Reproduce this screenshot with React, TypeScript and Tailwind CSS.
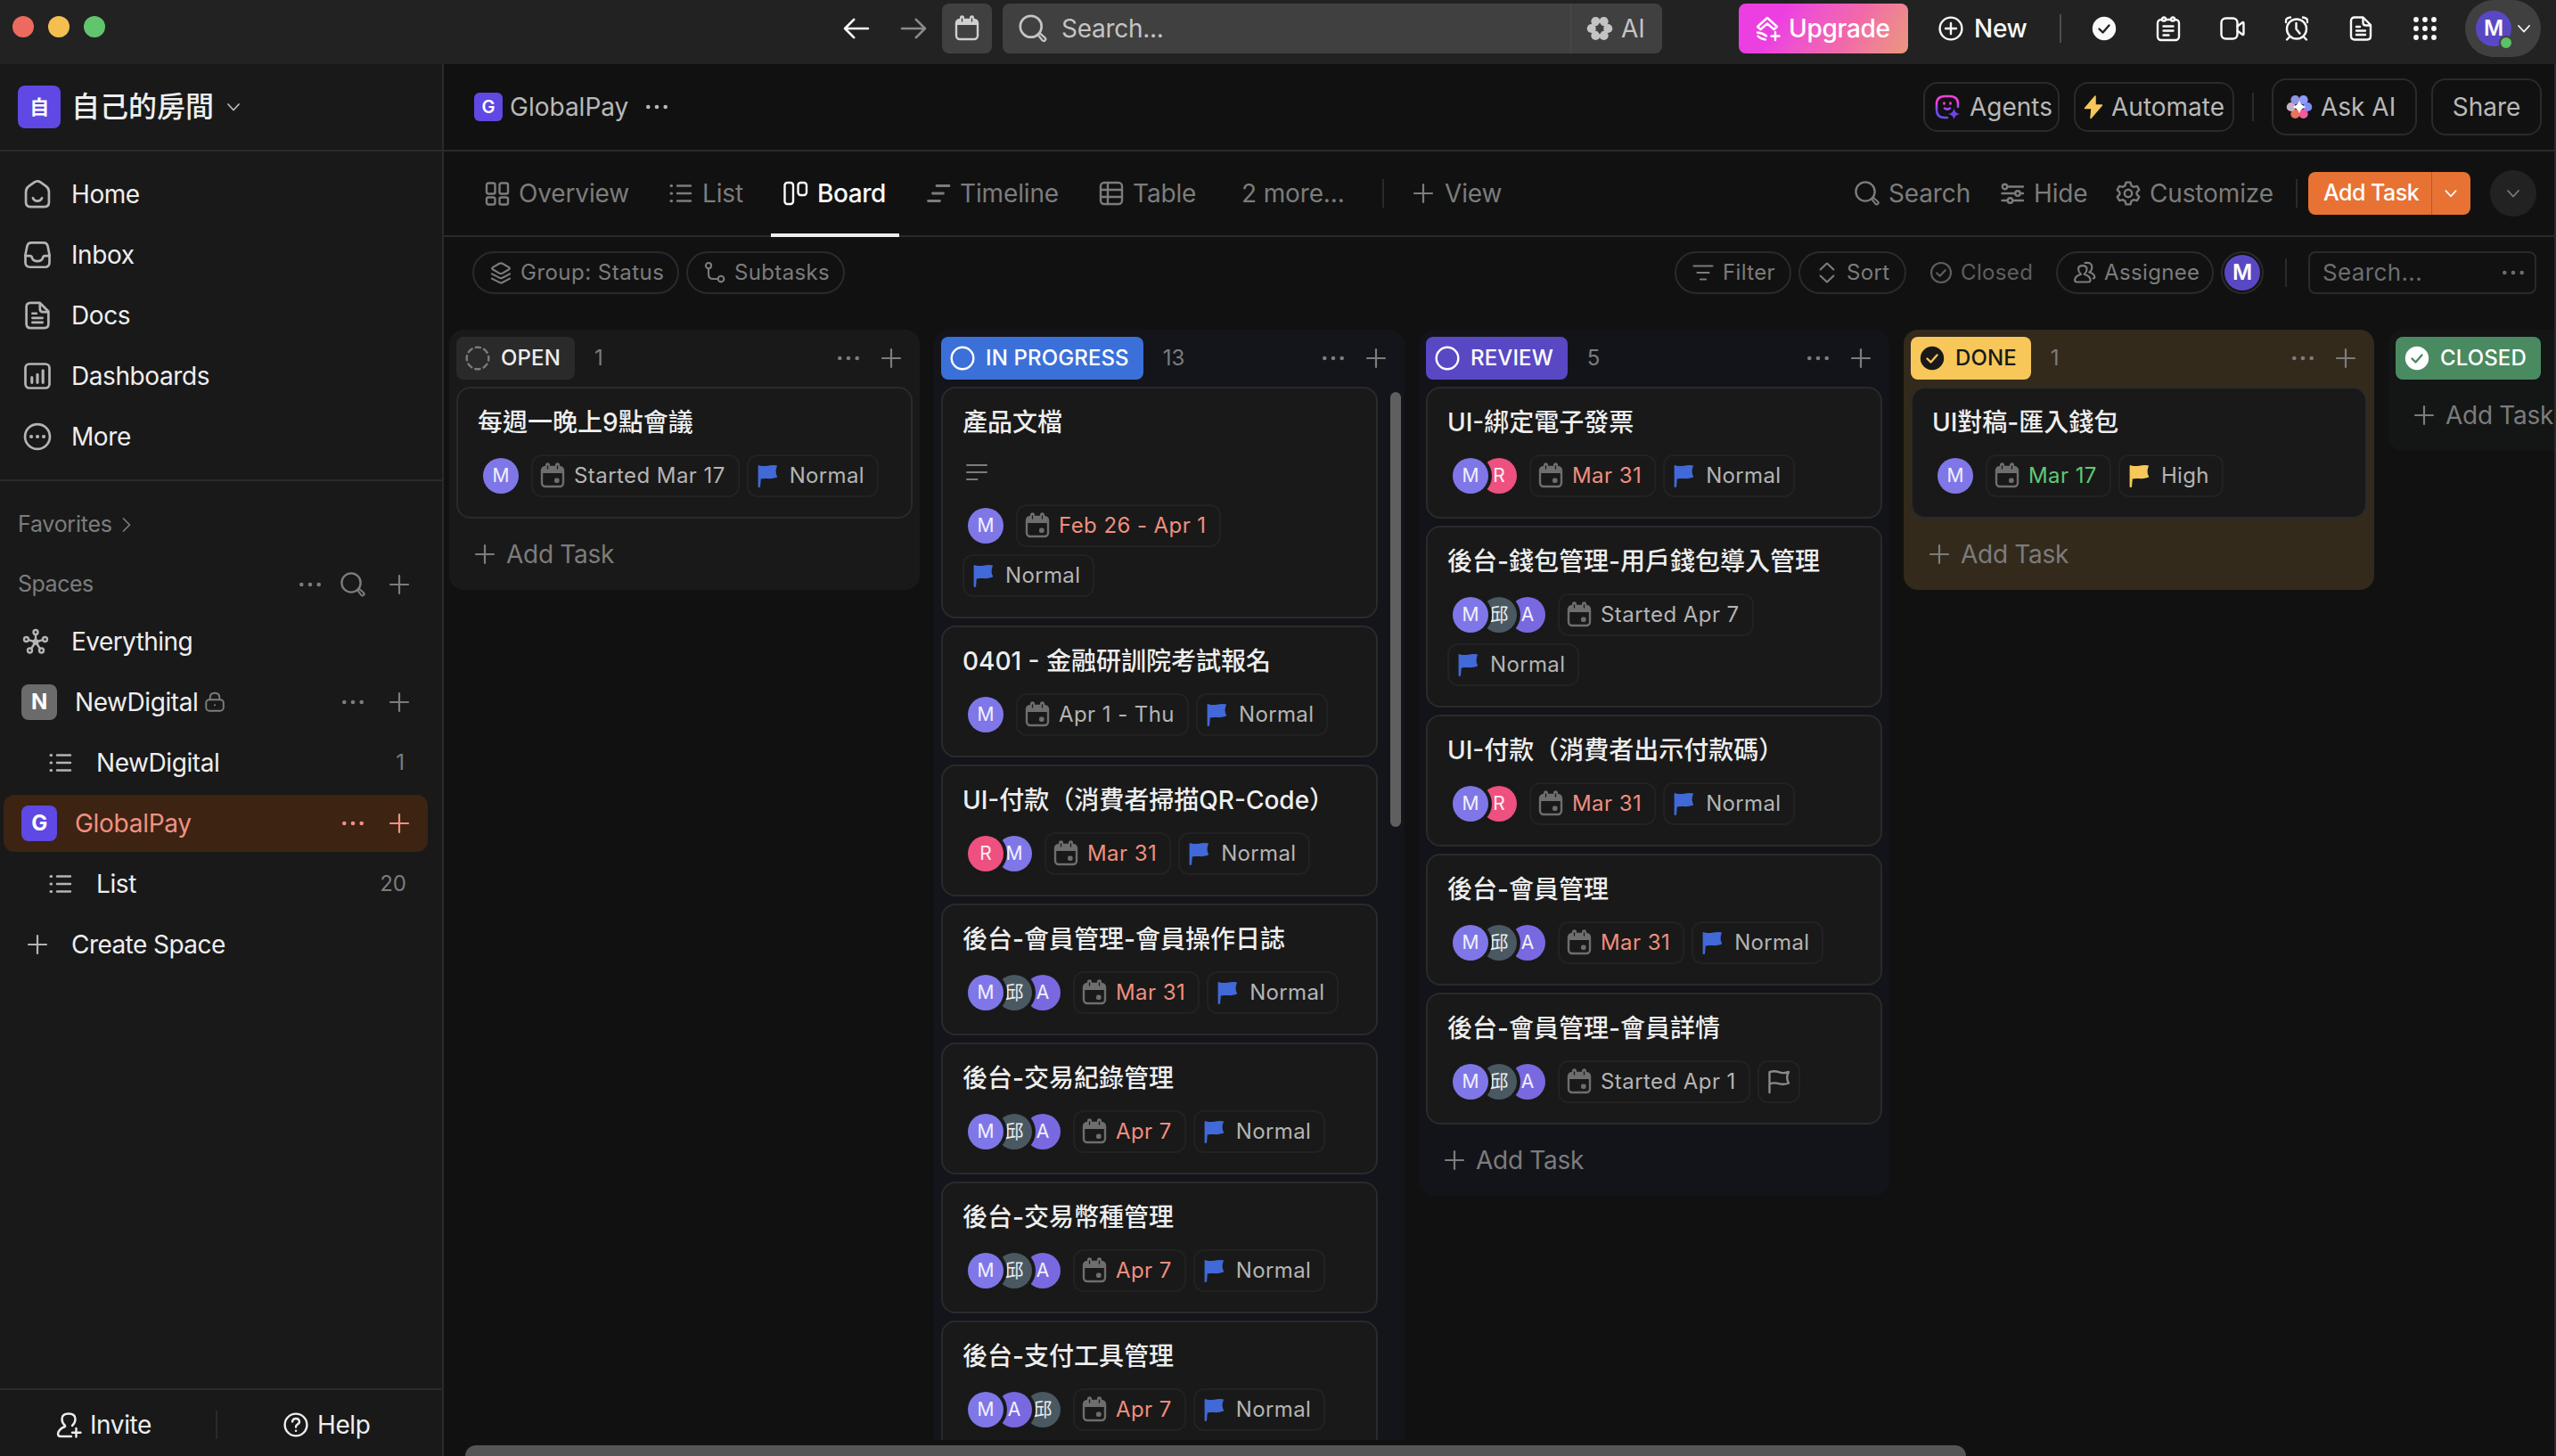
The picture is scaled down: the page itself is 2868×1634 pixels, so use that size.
import type { ReactNode } from "react";

type IconProps = { className?: string; children?: ReactNode };

// every icon is drawn on a 32 unit grid
function Icon({ className = "", children }: IconProps) {
  return (
    <svg
      viewBox="0 0 32 32"
      fill="none"
      stroke="currentColor"
      strokeWidth="2.4"
      strokeLinecap="round"
      strokeLinejoin="round"
      className={`shrink-0 ${className}`}
    >
      {children}
    </svg>
  );
}

const Dots = ({ className = "size-8" }) => (
  <Icon className={className}>
    <g fill="currentColor" stroke="none">
      <circle cx="6.3" cy="16" r="2.3" />
      <circle cx="16" cy="16" r="2.3" />
      <circle cx="25.7" cy="16" r="2.3" />
    </g>
  </Icon>
);

const Plus = ({ className = "size-8" }) => (
  <Icon className={className}>
    <path d="M16 6v20M6 16h20" strokeWidth="2.2" />
  </Icon>
);

const Chevron = ({ className = "size-8" }) => (
  <Icon className={className}>
    <path d="M10 13l6 6.5 6-6.5" strokeWidth="1.8" />
  </Icon>
);

const SearchIcon = ({ className = "size-8" }) => (
  <Icon className={className}>
    <circle cx="14" cy="14" r="10.6" />
    <path d="M21.2 22.6l1.8-1.8 5 4.4q1.4 1.4.1 2.7t-2.7-.1z" strokeWidth="2" />
  </Icon>
);

const ListIcon = ({ className = "size-8" }) => (
  <Icon className={className}>
    <path d="M12 7.5H27M12 16H27M12 24.5H27" />
    <path d="M5 7.5h.6M5 16h.6M5 24.5h.6" strokeWidth="3" />
  </Icon>
);

const DocIcon = ({ className = "size-8" }) => (
  <Icon className={className}>
    <path d="M9 3.5h9.5L27 12v12.5q0 4-4 4H9q-4 0-4-4v-17q0-4 4-4z" />
    <path d="M18.5 4v5.5q0 3 3 3h5" />
    <path d="M11 14h4M11 18.5h10M11 23h10" />
  </Icon>
);

const CalendarIcon = ({ className = "size-8" }) => (
  <Icon className={className}>
    <rect x="4" y="6" width="24" height="22" rx="4" />
    <path d="M4 7.5q1-2 4-2h16q3 0 4 2V13H4z" fill="currentColor" stroke="none" />
    <path d="M10.5 3.8v2.4M21.5 3.8v2.4" strokeWidth="5" />
    <path d="M10.5 5v3M21.5 5v3" stroke="#191919" strokeWidth="1.3" />
    <rect x="18" y="18.5" width="5.6" height="5.6" rx="2" fill="currentColor" stroke="none" />
  </Icon>
);

const FlagIcon = ({ className = "size-8", outline = false }) => (
  <Icon className={className}>
    {outline ? (
      <path d="M5.500 28V5.200q5.500-2 10.500 0t11-.2q-3.600 6.300 0 12.500-5.500 2.200-11 .6t-10.500.4" />
    ) : (
      <path
        d="M5.500 28V5q5 1.600 10 .6t9.500-.4q-2.800 6 .2 11.800-5 1.700-9.700 1.200T7 18.500L6.200 28z"
        fill="currentColor"
        strokeWidth="1.800"
      />
    )}
  </Icon>
);

const CheckSolid = ({ className = "size-8", tick = "#222222" }) => (
  <Icon className={className}>
    <circle cx="16" cy="16" r="13.2" fill="currentColor" stroke="none" />
    <path d="M10.500 16.500l4 4 7-8" stroke={tick} />
  </Icon>
);

const HomeIcon = ({ className = "" }) => (
  <Icon className={className}>
    <path d="M4.500 13.500q0-3.500 3-5.600l5.300-3.700q3.200-2.200 6.400 0l5.300 3.700q3 2.100 3 5.600V24q0 4.500-4.500 4.500H9q-4.500 0-4.500-4.500z" />
    <path d="M11.500 19.800q1.500 3 4.500 3t4.500-3" />
  </Icon>
);

const InboxIcon = ({ className = "" }) => (
  <Icon className={className}>
    <path d="M10 3.800h12q3.600 0 4.300 3.600l1.700 8.600v7.500q0 4.700-4.700 4.700H8.700Q4 28.200 4 23.500V16l1.700-8.600Q6.400 3.800 10 3.800z" />
    <path d="M4 17h4.200q2 0 2.500 2 .9 3.300 5.300 3.300t5.300-3.300q.5-2 2.500-2H28" />
  </Icon>
);

const DashIcon = ({ className = "" }) => (
  <Icon className={className}>
    <rect x="4" y="4" width="24" height="24" rx="4" />
    <path d="M10.500 17.500v5M16 14.500v8M21.500 10.500v12" strokeWidth="2.800" />
  </Icon>
);

const MoreIcon = ({ className = "" }) => (
  <Icon className={className}>
    <circle cx="16" cy="16" r="12.400" />
    <path d="M9.800 16h.1M16 16h.1M22.200 16h.1" strokeWidth="3.600" />
  </Icon>
);

const HubIcon = ({ className = "" }) => (
  <Icon className={className}>
    <circle cx="16" cy="5.500" r="2.500" />
    <circle cx="5.500" cy="13.500" r="2.500" />
    <circle cx="26.500" cy="13.500" r="2.500" />
    <circle cx="9.500" cy="26" r="2.500" />
    <circle cx="22.500" cy="26" r="2.500" />
    <circle cx="16" cy="16.500" r="2.300" fill="currentColor" />
    <path d="M16 8v8.500M8 14.200l8 2.300 8-2.300M11 24l5-7.500 5 7.500" />
  </Icon>
);

const LockIcon = ({ className = "" }) => (
  <Icon className={className}>
    <rect x="4" y="12.500" width="24" height="15.500" rx="4.500" />
    <path d="M9.500 12.500V10q0-6.500 6.500-6.500T22.500 10v2.500M16 20h.1" />
  </Icon>
);

const GearIcon = ({ className = "" }) => (
  <Icon className={className}>
    <circle cx="16" cy="16" r="4.200" />
    <path d="M13.600 3.600h4.800l1.200 3.800 2.400 1.400 3.900-.9 2.400 4.100-2.700 2.900v2.200l2.700 2.900-2.400 4.100-3.900-.9-2.400 1.400-1.200 3.800h-4.800l-1.200-3.800L10 23.200l-3.900.9L3.700 20l2.700-2.900v-2.200L3.700 12l2.400-4.100 3.900.9 2.400-1.400z" />
  </Icon>
);

function FlowerIcon({ className = "", color = false }) {
  const fills = ["#8f9bff", "#7f8cf5", "#f25a9b", "#e9705a", "#c9b0c4", "#8f97e0"];
  return (
    <Icon className={className}>
      <g stroke="none">
        {[30, 90, 150, 210, 270, 330].map((angle, i) => (
          <circle
            key={angle}
            cx={16 + 9.2 * Math.sin((angle * Math.PI) / 180)}
            cy={16 - 9.2 * Math.cos((angle * Math.PI) / 180)}
            r="5.100"
            fill={color ? fills[i] : "currentColor"}
          />
        ))}
        {color ? (
          <path d="M16 8.500q1.500 6 7.500 7.500-6 1.500-7.500 7.500-1.500-6-7.500-7.500 6-1.500 7.500-7.500z" fill="#ffffff" />
        ) : (
          <path d="M16 9.500l4.600 6.500-4.600 6.500-4.600-6.500z" fill="#404040" />
        )}
      </g>
    </Icon>
  );
}

const Divider = ({ className = "" }) => (
  <div className={`h-8 w-0.5 shrink-0 bg-[#2a2a2a] ${className}`} />
);

function TopBar() {
  return (
    <header className="flex h-[72px] shrink-0 items-center bg-[#222222] pb-2 text-[#fafafa]">
      <div className="mt-[-4px] flex w-[931px] shrink-0 gap-4 pl-3.5">
        <span className="size-6 rounded-full bg-[#ec6a5e]" />
        <span className="size-6 rounded-full bg-[#f4bf50]" />
        <span className="size-6 rounded-full bg-[#61c56e]" />
      </div>
      <div className="flex w-[126px] shrink-0 gap-8 pl-3">
        <Icon className="size-9">
          <path d="M27.500 16H4.500M13.500 7L4.500 16l9 9" />
        </Icon>
        <Icon className="-ml-1 size-9 text-[#8a8a8a]">
          <path d="M4.500 16h23M18.500 7l9 9-9 9" />
        </Icon>
      </div>
      <div className="flex h-14 w-14 shrink-0 items-center justify-center rounded-lg bg-[#404040] text-[#d0d0d0]">
        <Icon className="size-8">
          <rect x="4" y="6" width="24" height="22" rx="4" />
          <path d="M4 7.500q1-2 4-2h16q3 0 4 2V12H4z" fill="currentColor" stroke="none" />
          <path d="M10.500 3.800v2.400M21.500 3.800v2.400" strokeWidth="5" />
          <path d="M10.500 5v3M21.500 5v3" stroke="#404040" strokeWidth="1.300" />
        </Icon>
      </div>
      <div className="ml-3 flex h-14 w-[740px] shrink-0 items-center rounded-lg bg-[#404040] text-[28px] text-[#c4c4c4]">
        <SearchIcon className="ml-4 size-9" />
        <span className="ml-3.5 w-[571px] tracking-[-0.01em]">Search...</span>
        <div className="flex h-14 items-center border-l border-[#4a4a4a] pl-4">
          <FlowerIcon className="size-8" />
          <span className="ml-2">AI</span>
        </div>
      </div>
      <div className="ml-auto flex h-14 w-[190px] shrink-0 items-center rounded-lg bg-linear-120 from-[#ec3fe2] from-25% via-[#f269a8] via-65% to-[#ea987c] pl-4 text-[28px] font-medium tracking-[-0.01em] text-white">
        <Icon className="size-8">
          <path d="M5 14L16 4l11 10-3.500 3L16 10.500 8.500 17z" />
          <path d="M5 20.500q6 .5 10 4M5.500 24.500q3.500 3.500 8.500 4M25 20v9M20.500 24.500h9" />
        </Icon>
        <span className="ml-2">Upgrade</span>
      </div>
      <div className="ml-8 flex w-[138px] shrink-0 items-center gap-2.5 text-[28px] font-medium tracking-[-0.01em]">
        <Icon className="size-8">
          <circle cx="16" cy="16" r="12.400" />
          <path d="M16 10v12M10 16h12" />
        </Icon>
        New
      </div>
      <div className="h-8 w-0.5 shrink-0 bg-[#4d4d4d]" />
      <div className="flex w-[555px] shrink-0 items-center pl-8">
        <CheckSolid className="mr-10 size-8" />
        <Icon className="mr-10 size-8">
          <rect x="4" y="6" width="24" height="23" rx="4" />
          <path d="M10.500 13.500h11M10.500 18.500h11M10.500 23.500h6" />
          <circle cx="11" cy="5.500" r="2" fill="#222222" />
          <circle cx="21" cy="5.500" r="2" fill="#222222" />
        </Icon>
        <Icon className="mr-10 size-8">
          <rect x="3.500" y="4.500" width="18" height="23" rx="5" />
          <path d="M21.500 13.500l6-4.500q1 0 1 1v12q0 1-1 1l-6-4.500" />
        </Icon>
        <Icon className="mr-10 size-8">
          <circle cx="16" cy="16.500" r="11" />
          <path d="M15.500 10v6.500l4 5M4 9q-1-5 5-5.500M28 9q1-5-5-5.500M8 25.500l-3 3M24 25.500l3 3" />
        </Icon>
        <DocIcon className="mr-10 size-8" />
        <Icon className="mr-[29px] size-8">
          <g fill="currentColor" stroke="none">
            {[6, 16, 26].map((y) =>
              [6, 16, 26].map((x) => <circle key={`${x}-${y}`} cx={x} cy={y} r="2.900" />)
            )}
          </g>
        </Icon>
        <div className="flex h-16 w-[85px] shrink-0 items-center rounded-full bg-[#404040] pl-3">
          <div className="relative flex size-10 shrink-0 items-center justify-center rounded-full bg-[#5948c4] text-2xl font-semibold">
            M
            <span className="absolute -right-0.5 -bottom-1 size-4 rounded-full border-2 border-[#404040] bg-[#5ac267]" />
          </div>
          <Chevron className="-ml-0.5 size-8" />
        </div>
      </div>
    </header>
  );
}

const nav = [
  { label: "Home", icon: HomeIcon },
  { label: "Inbox", icon: InboxIcon },
  { label: "Docs", icon: DocIcon },
  { label: "Dashboards", icon: DashIcon },
  { label: "More", icon: MoreIcon },
];

function Sidebar() {
  return (
    <aside className="flex w-[498px] shrink-0 flex-col border-r-2 border-[#2a2a2a] bg-[#191919] text-[28px] tracking-[-0.015em] text-[#eeeeee]">
      <div className="flex h-[98px] shrink-0 items-center border-b-2 border-[#2a2a2a] pl-5">
        <div className="flex size-12 items-center justify-center rounded-lg bg-[#5f48e3] text-[22px] font-semibold text-white">
          自
        </div>
        <span className="ml-3 text-[32px] font-medium tracking-normal">自己的房間</span>
        <Chevron className="ml-1.5 size-8 text-[#b8b8b8]" />
      </div>

      <nav className="h-[370px] shrink-0 border-b-2 border-[#2a2a2a] pt-3.5">
        {nav.map((item) => (
          <div key={item.label} className="flex h-[68px] items-center pl-6">
            <item.icon className="size-9 text-[#b4b4b4]" />
            <span className="ml-5">{item.label}</span>
          </div>
        ))}
      </nav>

      <div className="mt-[15px] flex h-[68px] items-center pl-5 text-[25px] tracking-[-0.01em] text-[#7c7c7c]">
        Favorites
        <Icon className="ml-0.5 size-7">
          <path d="M12 8l8 8-8 8" strokeWidth="2" />
        </Icon>
      </div>
      <div className="flex h-[66px] items-center pr-8 pl-5 text-[25px] tracking-[-0.02em] text-[#7c7c7c]">
        Spaces
        <Dots className="ml-auto size-8" />
        <SearchIcon className="ml-4 size-8" />
        <Plus className="ml-5 size-8" />
      </div>
      <div className="flex h-[62px] items-center pl-6">
        <HubIcon className="size-8 text-[#b4b4b4]" />
        <span className="ml-6 tracking-[-0.02em]">Everything</span>
      </div>
      <div className="mt-[3px] flex h-[68px] items-center pr-8 pl-6">
        <div className="flex size-10 items-center justify-center rounded-lg bg-[#6b6b6b] text-2xl font-bold text-white">
          N
        </div>
        <span className="ml-5">NewDigital</span>
        <LockIcon className="ml-1.5 size-6.5 text-[#7c7c7c]" />
        <Dots className="ml-auto size-8 text-[#7c7c7c]" />
        <Plus className="ml-5 size-8 text-[#7c7c7c]" />
      </div>
      <div className="flex h-[68px] items-center pr-[42px] pl-[52px]">
        <ListIcon className="size-8 text-[#b4b4b4]" />
        <span className="ml-6">NewDigital</span>
        <span className="ml-auto text-2xl tracking-normal text-[#7c7c7c]">1</span>
      </div>
      <div className="mx-1 my-0.5 flex h-16 w-[476px] items-center rounded-xl bg-[#3c2312] pr-4 pl-5 text-[#f09183]">
        <div className="flex size-10 items-center justify-center rounded-lg bg-[#5f48e3] text-2xl font-bold text-white">
          G
        </div>
        <span className="ml-5 tracking-[-0.01em]">GlobalPay</span>
        <Dots className="ml-auto size-8" />
        <Plus className="ml-5 size-8" />
      </div>
      <div className="flex h-[68px] items-center pr-10 pl-[52px]">
        <ListIcon className="size-8 text-[#b4b4b4]" />
        <span className="ml-6">List</span>
        <span className="ml-auto text-2xl tracking-normal text-[#7c7c7c]">20</span>
      </div>
      <div className="flex h-[68px] items-center pl-[26px]">
        <Plus className="size-8 text-[#b4b4b4]" />
        <span className="ml-[22px] tracking-[-0.02em]">Create Space</span>
      </div>

      <div className="mt-auto flex h-[76px] shrink-0 items-center border-t-2 border-[#2a2a2a] pt-1">
        <div className="flex w-[242px] items-center pl-[61px]">
          <Icon className="size-8">
            <path d="M20 17q3.500-3 3.500-7.500 0-6-7.500-6t-7.500 6q0 4.500 3.500 7.500v1q-7 2.500-8 8 0 3 3 3h12M24.500 20v9.500M20 24.700h9.500" />
          </Icon>
          <span className="ml-2">Invite</span>
        </div>
        <Divider />
        <div className="flex items-center pl-[72px]">
          <Icon className="size-8">
            <circle cx="16" cy="16" r="12.400" />
            <path d="M12 12.500q.5-3.500 4-3.500t4 3.300q0 2.200-2.500 3.400Q16 16.500 16 18.500M16 22.700h.1" />
          </Icon>
          <span className="ml-2">Help</span>
        </div>
      </div>
    </aside>
  );
}

function TitleBar() {
  return (
    <div className="flex h-[98px] shrink-0 items-center border-b-2 border-[#2a2a2a] pr-3.5 pl-[34px] text-[28px] text-[#b8b8b8]">
      <div className="flex size-8 items-center justify-center rounded-md bg-[#5f48e3] text-xl font-semibold text-white">
        G
      </div>
      <span className="ml-2">GlobalPay</span>
      <Dots className="ml-4 size-8" />

      <div className="ml-auto flex h-14 w-[153px] items-center rounded-2xl border-2 border-[#2a2a2a] pl-[9px]">
        <svg viewBox="0 0 32 32" fill="none" strokeWidth="2.600" strokeLinecap="round" className="size-8 shrink-0">
          <defs>
            <linearGradient id="agents" x1="0" y1="0" x2="0" y2="1">
              <stop offset="0.300" stopColor="#f23fe0" />
              <stop offset="0.700" stopColor="#6350f0" />
            </linearGradient>
          </defs>
          <path d="M28 16v-3q0-9-9-9h-6q-9 0-9 9v6q0 9 9 9h3" stroke="url(#agents)" />
          <path d="M12.500 11.500v1M19.500 11.500v1" stroke="#f23fe0" />
          <path d="M13 17.500q3 2.200 6 0" stroke="#a04cf0" />
          <path d="M23.500 17.500q1 5.500 6.500 6.500-5.500 1-6.500 6-1-5-6.500-6 5.500-1 6.500-6.500z" fill="#6a45f0" />
        </svg>
        <span className="ml-[9px]">Agents</span>
      </div>
      <div className="ml-4 flex h-14 w-[180px] items-center rounded-2xl border-2 border-[#2a2a2a] pl-1">
        <Icon className="size-8 text-[#f8c75a]">
          <path d="M18 4L6.500 17.500H14L13 28.500 25.500 14H18z" fill="currentColor" strokeWidth="1.500" />
        </Icon>
        <span className="ml-1">Automate</span>
      </div>
      <Divider className="ml-5" />
      <div className="ml-5 flex h-16 w-[163px] items-center rounded-2xl border-2 border-[#2a2a2a] pl-[13px]">
        <FlowerIcon className="size-8" color />
        <span className="ml-2">Ask AI</span>
      </div>
      <div className="ml-4 flex h-16 w-[124px] items-center justify-center rounded-2xl border-2 border-[#2a2a2a]">
        Share
      </div>
    </div>
  );
}

function Tabs() {
  return (
    <div className="flex h-24 shrink-0 items-center border-b-2 border-[#2a2a2a] text-[28px] tracking-[-0.005em] text-[#7c7c7c]">
      <div className="flex w-[208px] shrink-0 items-center pl-11">
        <Icon className="size-8">
          <rect x="4" y="4.500" width="9.500" height="12" rx="2" />
          <rect x="18.500" y="4.500" width="9.500" height="12" rx="2" />
          <rect x="4" y="20.500" width="9.500" height="8" rx="2" />
          <rect x="18.500" y="20.500" width="9.500" height="8" rx="2" />
        </Icon>
        <span className="ml-2">Overview</span>
      </div>
      <div className="flex w-[159px] shrink-0 items-center pl-[42px]">
        <ListIcon className="size-8" />
        <span className="ml-2">List</span>
      </div>
      <div className="relative flex h-full w-36 shrink-0 items-center pl-3 font-medium tracking-[-0.015em] text-[#fafafa]">
        <Icon className="size-8">
          <rect x="3.500" y="4" width="9.500" height="24" rx="3" />
          <rect x="18.500" y="4" width="9.500" height="14" rx="3" />
        </Icon>
        <span className="ml-2">Board</span>
        <span className="absolute inset-x-0 -bottom-0.5 h-1 bg-[#eeeeee]" />
      </div>
      <div className="flex w-[193px] shrink-0 items-center pl-7">
        <Icon className="size-8">
          <path d="M14 7.500h14M9.500 16h12M4.500 24.500h13" strokeWidth="2.800" />
        </Icon>
        <span className="ml-2">Timeline</span>
      </div>
      <div className="flex w-[162px] shrink-0 items-center pl-[29px]">
        <Icon className="size-8">
          <rect x="4" y="4" width="24" height="24" rx="4" />
          <path d="M4 12h24M4 20h24M12 4v24" />
        </Icon>
        <span className="ml-2">Table</span>
      </div>
      <span className="w-[187px] shrink-0 pl-[29px]">2 more...</span>
      <Divider />
      <Plus className="ml-[28px] size-8" />
      <span className="ml-2">View</span>

      <div className="ml-auto flex w-[163px] shrink-0 items-center">
        <SearchIcon className="size-8" />
        <span className="ml-2">Search</span>
      </div>
      <div className="flex w-[130px] shrink-0 items-center">
        <Icon className="size-8">
          <path d="M11 8.500h17M4.500 16h14M25 16h3M4.500 24h6M17.500 24H28" />
          <circle cx="7.500" cy="8.500" r="2.700" />
          <circle cx="22" cy="16" r="2.700" />
          <circle cx="13.500" cy="24" r="2.700" />
        </Icon>
        <span className="ml-2">Hide</span>
      </div>
      <div className="flex w-[204px] shrink-0 items-center">
        <GearIcon className="size-8" />
        <span className="ml-2">Customize</span>
      </div>
      <Divider />
      <div className="ml-3 flex h-12 w-[182px] shrink-0 items-center rounded-lg bg-[#e87233] text-[25px] font-medium tracking-[-0.02em] text-white">
        <span className="w-[138px] pl-[17px]">Add Task</span>
        <span className="flex h-12 items-center border-l border-[#b85a2c] pl-1.5">
          <Chevron className="size-7.5" />
        </span>
      </div>
      <div className="mr-5 ml-[22px] flex size-[52px] shrink-0 items-center justify-center rounded-full bg-[#222222]">
        <Chevron className="size-8" />
      </div>
    </div>
  );
}

function FilterBar() {
  return (
    <div className="flex h-20 shrink-0 items-center text-2xl tracking-[0.015em] text-[#7c7c7c]">
      <div className="ml-8 flex h-12 w-[232px] shrink-0 items-center rounded-full border-2 border-[#2a2a2a] pl-4">
        <Icon className="size-7">
          <path d="M14 4.300q2-1 4 0l8.500 5q1.500 1.200 0 2.400l-8.500 5q-2 1-4 0l-8.500-5q-1.500-1.200 0-2.400z" />
          <path d="M4.500 17.500l9.500 5q2 1 4 0l9.500-5M4.500 23.500l9.500 5q2 1 4 0l9.500-5" />
        </Icon>
        <span className="ml-2 tracking-[0.02em]">Group: Status</span>
      </div>
      <div className="ml-2 flex h-12 w-[178px] shrink-0 items-center rounded-full border-2 border-[#2a2a2a] pl-4">
        <Icon className="size-7">
          <circle cx="8" cy="7" r="3.500" />
          <circle cx="24" cy="24" r="3.800" />
          <path d="M8 10.500V18q0 6 6 6h6" />
        </Icon>
        <span className="ml-2">Subtasks</span>
      </div>

      <div className="ml-auto flex h-12 w-[131px] shrink-0 items-center rounded-full border-2 border-[#2a2a2a] pl-4">
        <Icon className="size-7">
          <path d="M4 7.500h24M8.500 16h15M12.500 24.500h7" />
        </Icon>
        <span className="ml-2">Filter</span>
      </div>
      <div className="ml-2 flex h-12 w-[121px] shrink-0 items-center rounded-full border-2 border-[#2a2a2a] pl-4">
        <Icon className="size-7">
          <path d="M7.500 12L16 4l8.500 8M7.500 20l8.500 8 8.500-8" />
        </Icon>
        <span className="ml-2">Sort</span>
      </div>
      <div className="flex w-[168px] shrink-0 items-center pl-[25px] text-[#5f5f5f]">
        <Icon className="size-7">
          <circle cx="16" cy="16" r="12.600" />
          <path d="M10.500 16.500l4 3.800 7-7.500" />
        </Icon>
        <span className="ml-2">Closed</span>
      </div>
      <div className="flex h-12 w-[177px] shrink-0 items-center rounded-full border-2 border-[#2a2a2a] pl-4">
        <Icon className="size-7">
          <path d="M15.500 18q3.500-3 3.500-6.500 0-4.500-5.500-4.500T8 11.500Q8 15 11.500 18q-7.500 2-8 7.500 0 2.500 2.500 2.500h15q2.500 0 2.500-2.500-.5-5.500-8-7.500z" />
          <path d="M16.500 3.500q9-1.500 9 5.500 0 4-3.500 6.500 6.500 2 7 6 0 2-2 2" />
        </Icon>
        <span className="ml-2">Assignee</span>
      </div>
      <div className="ml-2 flex size-12 shrink-0 items-center justify-center rounded-full border-2 border-[#2a2a2a]">
        <div className="flex size-10 shrink-0 items-center justify-center rounded-full bg-[#5948c4] text-2xl font-semibold tracking-normal text-white">
          M
        </div>
      </div>
      <Divider className="ml-6" />
      <div className="mr-5 ml-6 flex h-12 w-64 shrink-0 items-center rounded-lg border-2 border-[#2a2a2a] pr-2 pl-3.5 text-[26px] text-[#6e6e6e]">
        Search...
        <Dots className="ml-auto size-8" />
      </div>
    </div>
  );
}

type Task = {
  title: string;
  people: string;
  date: string;
  tone?: "late" | "done";
  priority?: "Normal" | "High";
  description?: boolean;
};

const peopleColors: Record<string, string> = {
  M: "bg-[#7f77e8]",
  R: "bg-[#ee5080]",
  A: "bg-[#7969e0]",
  邱: "bg-[#4a5862]",
};

const inProgress: Task[] = [
  { title: "產品文檔", people: "M", date: "Feb 26 - Apr 1", tone: "late", priority: "Normal", description: true },
  { title: "0401 - 金融研訓院考試報名", people: "M", date: "Apr 1 - Thu", priority: "Normal" },
  { title: "UI-付款（消費者掃描QR-Code）", people: "RM", date: "Mar 31", tone: "late", priority: "Normal" },
  { title: "後台-會員管理-會員操作日誌", people: "M邱A", date: "Mar 31", tone: "late", priority: "Normal" },
  { title: "後台-交易紀錄管理", people: "M邱A", date: "Apr 7", tone: "late", priority: "Normal" },
  { title: "後台-交易幣種管理", people: "M邱A", date: "Apr 7", tone: "late", priority: "Normal" },
  { title: "後台-支付工具管理", people: "MA邱", date: "Apr 7", tone: "late", priority: "Normal" },
];

const review: Task[] = [
  { title: "UI-綁定電子發票", people: "MR", date: "Mar 31", tone: "late", priority: "Normal" },
  { title: "後台-錢包管理-用戶錢包導入管理", people: "M邱A", date: "Started Apr 7", priority: "Normal" },
  { title: "UI-付款（消費者出示付款碼）", people: "MR", date: "Mar 31", tone: "late", priority: "Normal" },
  { title: "後台-會員管理", people: "M邱A", date: "Mar 31", tone: "late", priority: "Normal" },
  { title: "後台-會員管理-會員詳情", people: "M邱A", date: "Started Apr 1" },
];

function TaskCard({ task }: { task: Task }) {
  const dateColor =
    task.tone === "late" ? "text-[#ef8f7f]" : task.tone === "done" ? "text-[#5fca74]" : "text-[#b4b4b4]";

  return (
    <div className="shrink-0 rounded-2xl border-2 border-[#2a2a2a] bg-[#191919] px-[22px] pt-5 pb-[22px]">
      <div className="mb-3.5 h-10 text-[28px] leading-9 font-medium whitespace-nowrap text-[#eeeeee]">
        {task.title}
      </div>
      {task.description && (
        <div className="flex h-14 items-center pb-4">
          <Icon className="size-8 text-[#7c7c7c]">
            <path d="M5 8h22M5 16h22M5 24h11.500" strokeWidth="2" />
          </Icon>
        </div>
      )}
      <div className="flex flex-wrap gap-2 text-2xl text-[#b4b4b4]">
        <div className="flex h-12 items-center pr-1.5 pl-1.5">
          {task.people.split("").map((p, i) => (
            <span
              key={p}
              className={`relative flex size-10 items-center justify-center rounded-full text-[21px] text-white/90 ring-4 ring-[#191919] ${
                peopleColors[p]
              } ${i > 0 ? "-ml-2" : ""}`}
              style={{ zIndex: 5 - i }}
            >
              {p}
            </span>
          ))}
        </div>
        <div className="flex h-12 items-center rounded-xl border-2 border-[#222222] pr-3.5 pl-1.5">
          <CalendarIcon className="size-8 text-[#6e6e6e]" />
          <span className={`ml-2 tracking-[0.018em] ${dateColor}`}>{task.date}</span>
        </div>
        {task.priority ? (
          <div className="flex h-12 items-center rounded-xl border-2 border-[#222222] pr-3.5 pl-1.5">
            <FlagIcon
              className={`size-8 ${task.priority === "High" ? "text-[#f8c75a]" : "text-[#4169d8]"}`}
            />
            <span className="ml-2 tracking-[0.015em]">{task.priority}</span>
          </div>
        ) : (
          <div className="flex h-12 w-12 items-center justify-center rounded-xl border-2 border-[#222222]">
            <FlagIcon className="size-8 text-[#8a8a8a]" outline />
          </div>
        )}
      </div>
    </div>
  );
}

type ColumnHeadProps = { label: string; count?: number; badge: string; icon: ReactNode };

function ColumnHead({ label, count, badge, icon }: ColumnHeadProps) {
  return (
    <div className="flex h-12 w-[512px] shrink-0 items-center text-2xl text-[#7c7c7c]">
      <div
        className={`flex h-12 items-center gap-2.5 rounded-lg pr-4 pl-2 font-medium tracking-[0.005em] ${badge}`}
      >
        {icon}
        {label}
      </div>
      {count !== undefined && <span className="ml-[22px]">{count}</span>}
      <Dots className="ml-auto size-8" />
      <Plus className="mr-2 ml-4 size-8" />
    </div>
  );
}

const AddTask = () => (
  <div className="mt-2 flex h-12 items-center pl-4 text-[28px] tracking-[-0.01em] text-[#7c7c7c]">
    <Plus className="size-8" />
    <span className="ml-2 whitespace-nowrap">Add Task</span>
  </div>
);

const RingIcon = () => (
  <Icon className="size-8">
    <circle cx="16" cy="16" r="12.300" />
  </Icon>
);

function Board() {
  return (
    <div className="flex grow items-start gap-4 overflow-hidden pt-6 pl-1.5">
      <section className="flex h-[292px] w-[528px] shrink-0 flex-col gap-2 rounded-2xl bg-[#191919] p-2">
        <ColumnHead
          label="OPEN"
          count={1}
          badge="bg-[#2a2a2a] text-[#eeeeee]"
          icon={
            <Icon className="size-8 text-[#7c7c7c]">
              <circle cx="16" cy="16" r="12.300" strokeDasharray="5.400 4.260" strokeDashoffset="2.700" />
            </Icon>
          }
        />
        <TaskCard task={{ title: "每週一晚上9點會議", people: "M", date: "Started Mar 17", priority: "Normal" }} />
        <AddTask />
      </section>

      <section className="flex h-[1246px] w-[528px] shrink-0 flex-col rounded-t-2xl bg-[#13151b] p-2 pr-0 pb-0">
        <ColumnHead label="IN PROGRESS" count={13} badge="bg-[#3b70d9] text-white" icon={<RingIcon />} />
        <div className="mt-2 flex grow overflow-hidden">
          <div className="flex w-[490px] shrink-0 flex-col gap-2">
            {inProgress.map((task) => (
              <TaskCard key={task.title} task={task} />
            ))}
          </div>
          <div className="mt-1.5 ml-3.5 h-[488px] w-3 shrink-0 rounded-full bg-[#5f5f5f]" />
        </div>
      </section>

      <section className="flex h-[972px] w-[528px] shrink-0 flex-col gap-2 rounded-2xl bg-[#13141a] p-2">
        <ColumnHead label="REVIEW" count={5} badge="bg-[#5948c4] text-white" icon={<RingIcon />} />
        {review.map((task) => (
          <TaskCard key={task.title} task={task} />
        ))}
        <AddTask />
      </section>

      <section className="flex h-[292px] w-[528px] shrink-0 flex-col gap-2 rounded-2xl bg-[#332a1c] p-2">
        <ColumnHead
          label="DONE"
          count={1}
          badge="bg-[#f8c75a] text-[#191919]"
          icon={<CheckSolid className="size-8" tick="#f8c75a" />}
        />
        <TaskCard
          task={{ title: "UI對稿-匯入錢包", people: "M", date: "Mar 17", tone: "done", priority: "High" }}
        />
        <AddTask />
      </section>

      <section className="h-[136px] w-[528px] shrink-0 rounded-2xl bg-[#141515] p-2 pt-2">
        <ColumnHead
          label="CLOSED"
          badge="bg-[#4a8a61] text-white"
          icon={<CheckSolid className="size-8" tick="#4a8a61" />}
        />
        <div className="pt-2">
          <AddTask />
        </div>
      </section>
    </div>
  );
}

export default function App() {
  return (
    <div className="flex h-[1634px] w-[2868px] flex-col overflow-hidden bg-[#111111] font-['Inter','Noto_Sans_CJK_TC',sans-serif]">
      <TopBar />
      <div className="flex min-h-0 grow">
        <Sidebar />
        <main className="flex min-w-0 grow flex-col border-r-2 border-[#2a2a2a]">
          <TitleBar />
          <Tabs />
          <FilterBar />
          <Board />
          <div className="ml-6 h-3 w-[1684px] shrink-0 rounded-t-full bg-[#555555]" />
        </main>
      </div>
    </div>
  );
}
